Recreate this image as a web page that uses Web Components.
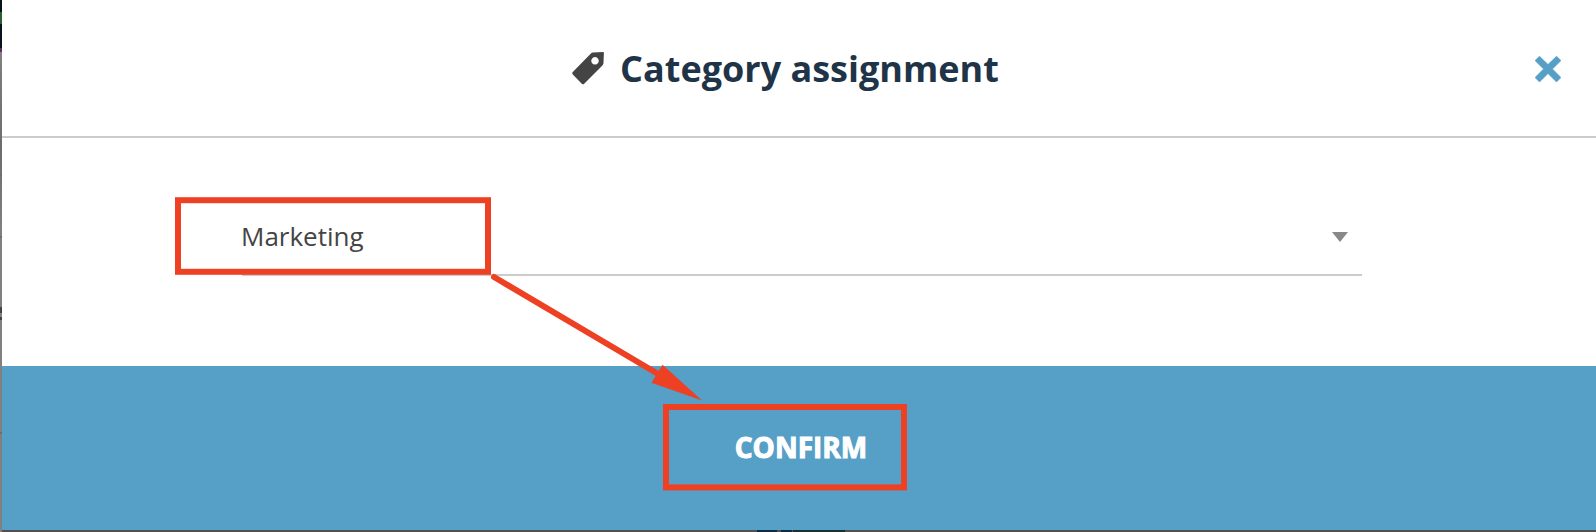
<!DOCTYPE html>
<html lang="en">
<head>
<meta charset="utf-8">
<title>Category assignment</title>
<style>
    body {
        margin: 0;
        overflow: hidden;
        font-family: "Open Sans", "Noto Sans", sans-serif;
    }
</style>
</head>
<body>
<page-backdrop>
    <assign-dialog>
        <dialog-title slot="header">Category assignment</dialog-title>
        <category-select>Marketing</category-select>
        <confirm-button slot="footer">CONFIRM</confirm-button>
    </assign-dialog>
    <callout-marks slot="overlay"></callout-marks>
</page-backdrop>

<script>
// Dimmed page that stays visible around the dialog
class PageBackdrop extends HTMLElement {
    constructor() {
        super();
        this.attachShadow({ mode: 'open' });
        this.shadowRoot.innerHTML = `
            <style>
                :host {
                    display: block;
                    position: relative;
                    box-sizing: border-box;
                    width: 1596px;
                    height: 532px;
                    padding: 0 0 2px 2px;
                    background:
                        linear-gradient(#0d2c42, #0d2c42) 757px 530px / 20px 2px no-repeat,
                        linear-gradient(#0d2c42, #0d2c42) 781px 530px / 11px 2px no-repeat,
                        linear-gradient(#183030, #183030) 793px 530px / 52px 2px no-repeat,
                        linear-gradient(#505050, #505050) 2px 530px / 1594px 2px no-repeat,
                        linear-gradient(#444, #444) 0 307px / 2px 6px no-repeat,
                        linear-gradient(#444, #444) 0 317px / 2px 3px no-repeat,
                        linear-gradient(#6d6d6d, #6d6d6d) 0 174px / 2px 2px no-repeat,
                        linear-gradient(#6d6d6d, #6d6d6d) 0 236px / 2px 2px no-repeat,
                        linear-gradient(#6d6d6d, #6d6d6d) 0 432px / 2px 2px no-repeat,
                        linear-gradient(#06131f 12px, #276031 12px 24px, #06131f 24px 48px, #553458 48px 52px, #808080 52px, #6c6c6c 150px, #808080 230px);
                }
            </style>
            <slot></slot>
            <slot name="overlay"></slot>
        `;
    }
}
customElements.define('page-backdrop', PageBackdrop);

class AssignDialog extends HTMLElement {
    constructor() {
        super();
        this.attachShadow({ mode: 'open' });
        this.shadowRoot.innerHTML = `
            <style>
                :host {
                    display: flex;
                    flex-direction: column;
                    height: 100%;
                    background: #fff;
                }
                header {
                    display: grid;
                    grid-template-columns: 1fr auto 1fr;
                    align-items: center;
                    box-sizing: border-box;
                    height: 138px;
                    padding: 2px 35px 0 8px;
                    border-bottom: 2px solid #ccc;
                }
                header slot {
                    display: block;
                    grid-column: 2;
                }
                .close {
                    justify-self: end;
                    padding: 0;
                    border: 0;
                    background: none;
                    line-height: 0;
                    cursor: pointer;
                }
                main {
                    box-sizing: border-box;
                    height: 228px;
                    padding: 54px 234px 0 240px;
                }
                footer {
                    flex: 1;
                    display: flex;
                    align-items: center;
                    background: #569fc6;
                }
            </style>
            <header>
                <slot name="header"></slot>
                <button class="close" aria-label="Close">
                    <svg width="26" height="26" viewBox="0 0 26 26">
                        <path d="M4.5 .3 13 8.6 21.5 .3 25.9 4.6 17.4 13 25.9 21.5 21.5 25.9 13 17.4 4.5 25.9 .1 21.5 8.6 13 .1 4.6Z" fill="#569fc6" stroke="#569fc6" stroke-width=".8" stroke-linejoin="round"/>
                    </svg>
                </button>
            </header>
            <main><slot></slot></main>
            <footer><slot name="footer"></slot></footer>
        `;
    }
}
customElements.define('assign-dialog', AssignDialog);

class DialogTitle extends HTMLElement {
    constructor() {
        super();
        this.attachShadow({ mode: 'open' });
        this.shadowRoot.innerHTML = `
            <style>
                :host {
                    display: flex;
                    align-items: center;
                    gap: 16px;
                    color: #1f3447;
                }
                svg {
                    flex: none;
                    margin-bottom: 2px;
                }
                h1 {
                    margin: 0;
                    font-size: 36px;
                    font-weight: 700;
                    line-height: 50px;
                    white-space: nowrap;
                }
            </style>
            <svg width="32" height="33" viewBox="0 0 32 33">
                <path fill="#444" fill-rule="evenodd" d="M18.9 1.4Q19.7 .7 20.9 .6L31 .1Q31.9 0 31.9 1L31.5 10.8Q31.400 12.5 30.4 13.5L12.2 31.7Q11 32.8 9.8 31.7L.8 22.4Q-.3 21.2 .8 20ZM23 5.100a3.700 3.700 0 1 0 .01 0Z"/>
            </svg>
            <h1><slot></slot></h1>
        `;
    }
}
customElements.define('dialog-title', DialogTitle);

class CategorySelect extends HTMLElement {
    constructor() {
        super();
        this.attachShadow({ mode: 'open' });
        this.shadowRoot.innerHTML = `
            <style>
                :host {
                    display: flex;
                    align-items: center;
                    justify-content: space-between;
                    box-sizing: border-box;
                    height: 84px;
                    padding: 6px 14px 0 0;
                    border-bottom: 2px solid #ccc;
                    color: #444;
                    font-size: 26px;
                    line-height: 36px;
                }
                span {
                    margin-left: -1px;
                }
                svg {
                    display: block;
                    margin-top: 2px;
                }
            </style>
            <span><slot></slot></span>
            <svg width="16" height="10" viewBox="0 0 16 10">
                <path d="M0 0H16L8 10Z" fill="#888"/>
            </svg>
        `;
    }
}
customElements.define('category-select', CategorySelect);

class ConfirmButton extends HTMLElement {
    constructor() {
        super();
        this.attachShadow({ mode: 'open' });
        this.shadowRoot.innerHTML = `
            <style>
                :host {
                    display: block;
                    flex: 1;
                    padding: 0 0 2px 4px;
                }
                button {
                    display: block;
                    margin: 0 auto;
                    padding: 0;
                    border: 0;
                    background: none;
                    color: #fff;
                    font: 700 28px/40px "Open Sans", "Noto Sans", sans-serif;
                    -webkit-text-stroke: 1px #fff;
                    cursor: pointer;
                }
            </style>
            <button><slot></slot></button>
        `;
    }
}
customElements.define('confirm-button', ConfirmButton);

// Red frames and the arrow between them, drawn over the dialog
class CalloutMarks extends HTMLElement {
    constructor() {
        super();
        this.attachShadow({ mode: 'open' });
        this.shadowRoot.innerHTML = `
            <style>
                :host {
                    display: block;
                    position: absolute;
                    inset: 0;
                    pointer-events: none;
                }
                svg {
                    display: block;
                }
            </style>
            <svg width="1596" height="532" viewBox="0 0 1596 532">
                <g fill="none" stroke="#ee4023" stroke-width="6">
                    <rect x="178" y="200.2" width="310" height="71.6"/>
                    <rect x="666" y="407" width="238" height="80.4"/>
                    <path d="M494 277 659 374.5" stroke-linecap="round"/>
                </g>
                <path d="M662.5 364.7 702 400.5 651.5 382.7Z" fill="#ee4023"/>
            </svg>
        `;
    }
}
customElements.define('callout-marks', CalloutMarks);
</script>
</body>
</html>
